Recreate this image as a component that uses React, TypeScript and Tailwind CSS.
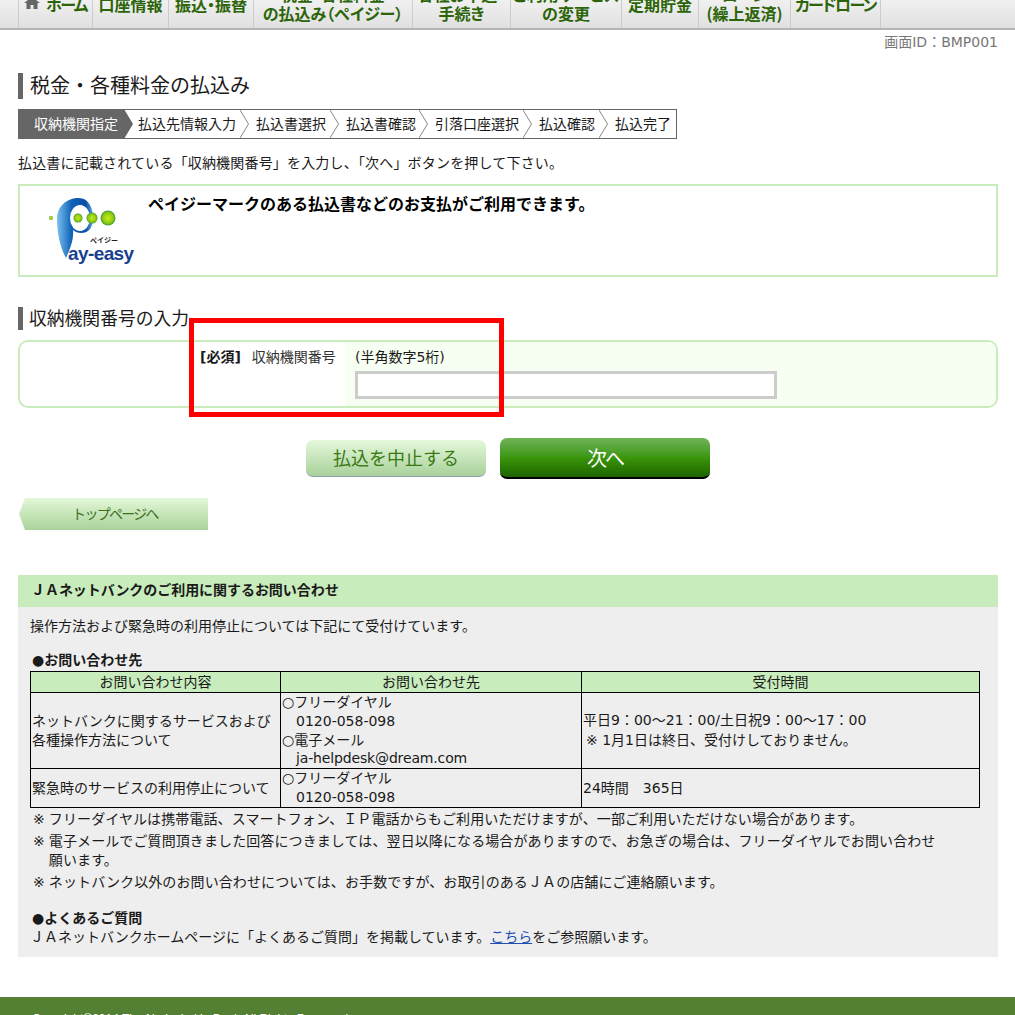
const navItems = [
  { w: "w-[74px]", lines: ["ホーム"], home: true, narrow: true },
  { w: "w-[76px]", lines: ["口座情報"] },
  { w: "w-[85px]", lines: ["振込・振替"] },
  { w: "w-[159px]", lines: ["税金・各種料金", "の払込み（ペイジー）"] },
  { w: "w-[98px]", lines: ["各種お申込・", "手続き"] },
  { w: "w-[111px]", lines: ["ご利用サービス", "の変更"] },
  { w: "w-[77px]", lines: ["定期貯金"] },
  { w: "w-[92px]", lines: ["ローン", "(繰上返済)"] },
  { w: "w-[91px]", lines: ["カードローン"], narrow: true },
];

const steps = [
  { label: "払込先情報入力", cls: "pl-[5px] pr-[4px]" },
  { label: "払込書選択", cls: "pl-[7px] pr-[4px]" },
  { label: "払込書確認", cls: "pl-[7px] pr-[3px]" },
  { label: "引落口座選択", cls: "pl-[7px] pr-[4px]" },
  { label: "払込確認", cls: "pl-[7px] pr-[4px]" },
];

function Chevron() {
  return (
    <svg width="9" height="28" viewBox="0 0 9 28" className="shrink-0">
      <polyline points="0,0 8.5,14 0,28" fill="none" stroke="#888888" strokeWidth="1" />
    </svg>
  );
}

function PayEasyLogo() {
  return (
    <svg width="90" height="70" viewBox="0 0 90 70" className="shrink-0">
      <defs>
        <linearGradient id="pBlue" x1="0" y1="0" x2="1" y2="0">
          <stop offset="0" stopColor="#7cc2ee" />
          <stop offset="0.4" stopColor="#0f62b8" />
          <stop offset="0.8" stopColor="#0b4fa6" />
          <stop offset="1" stopColor="#5fa8e0" />
        </linearGradient>
        <radialGradient id="dot" cx="0.5" cy="0.5" r="0.5">
          <stop offset="0" stopColor="#c8ea1c" />
          <stop offset="0.7" stopColor="#8ccb10" />
          <stop offset="1" stopColor="#3f9a3a" />
        </radialGradient>
      </defs>
      <path
        d="M9 24 C9 11 19 3 31 3 C40 3 45 12 45 23 C45 32 41 38 33 38 C30 38 27 37 25 35 C26 44 22 54 18 63 C12 52 9 38 9 24 Z"
        fill="url(#pBlue)"
      />
      <ellipse cx="32" cy="23" rx="10" ry="13" fill="#ffffff" />
      <circle cx="3" cy="23" r="2" fill="url(#dot)" />
      <circle cx="30" cy="23" r="4.500" fill="url(#dot)" />
      <circle cx="44" cy="23" r="5.500" fill="url(#dot)" />
      <circle cx="60" cy="23" r="7.500" fill="url(#dot)" />
      <text x="42" y="48" className="fill-[#222222] text-[7px] font-bold">
        ペイジー
      </text>
      <text x="20" y="65" className="fill-[#17418f] text-[19px] font-bold tracking-[-0.6px] [font-family:'Liberation_Sans',sans-serif]">
        ay-easy
      </text>
    </svg>
  );
}

export default function App() {
  return (
    <div className="relative h-[1015px] overflow-hidden bg-white text-[14px] leading-[19px] text-[#1a1a1a] [font-family:'DejaVu_Sans','Noto_Sans_CJK_JP',sans-serif]">
      <div className="flex h-[30px] items-end overflow-hidden border-b-2 border-[#b4b4b4] bg-gradient-to-b from-[#f0f0f0] to-[#e0e0e0] pl-[18px]">
        {navItems.map((item) => (
          <div
            key={item.lines.join("")}
            className={`${item.w} ${item.narrow ? "tracking-[-1.5px]" : ""} flex h-[48px] shrink-0 flex-col items-center justify-center border-l border-[#cccccc] text-[16px] leading-[19px] font-bold whitespace-nowrap text-[#2c6408] [font-family:'Noto_Sans_CJK_JP',sans-serif] [font-feature-settings:'palt'] last:border-r`}
          >
            {item.lines.map((line) => (
              <span key={line} className="flex items-center gap-[6px]">
                {item.home && (
                  <svg width="16" height="14" viewBox="0 0 16 14">
                    <path d="M8 0 L16 6 L13.500 6 L13.500 12 L9.500 12 L9.500 8 L6.500 8 L6.500 12 L2.500 12 L2.500 6 L0 6 Z" fill="#666666" />
                  </svg>
                )}
                {line}
              </span>
            ))}
          </div>
        ))}
      </div>

      <div className="flex justify-end pt-[3px] pr-[17px] text-[#777777]">画面ID：BMP001</div>

      <div className="px-[17px] pl-[18px]">
        <h1 className="mt-[21px] flex h-[26px] items-center border-l-[5px] border-[#666666] pl-[7px] text-[20px] font-normal">
          税金・各種料金の払込み
        </h1>

        <div className="mt-[10px] flex h-[30px] w-[659px] items-center border border-[#666666] whitespace-nowrap">
          <div className="flex h-[30px] items-center">
            <div className="-my-px -ml-px flex h-[30px] items-center bg-[#666666] pr-[6px] pl-[16px] text-white">収納機関指定</div>
            <div className="h-0 w-0 border-y-[15px] border-l-[9px] border-y-transparent border-l-[#666666]" />
          </div>
          {steps.map((step) => (
            <div key={step.label} className="flex items-center">
              <span className={step.cls}>{step.label}</span>
              <Chevron />
            </div>
          ))}
          <span className="pl-[7px]">払込完了</span>
        </div>

        <p className="mt-[15px] tracking-[0.18px]">払込書に記載されている「収納機関番号」を入力し、「次へ」ボタンを押して下さい。</p>

        <div className="mt-[11px] flex h-[93px] gap-[10px] border-2 border-[#c8ecbc] pt-[9px] pl-[28px]">
          <PayEasyLogo />
          <p className="-mt-[1px] text-[16px] leading-[22px] font-bold text-black">ペイジーマークのある払込書などのお支払がご利用できます。</p>
        </div>

        <h2 className="mt-[30px] flex h-[23px] items-center border-l-[5px] border-[#666666] pl-[6px] text-[17.800px] font-normal whitespace-nowrap">
          収納機関番号の入力
        </h2>

        <div className="mt-[10px] flex h-[68px] overflow-hidden rounded-[10px] border-2 border-[#c8ecbc]">
          <div className="flex w-[325px] shrink-0 items-start pt-[6px] pl-[180px]">
            <span className="font-bold">[必須]</span>
            <span className="ml-[11px] text-[#333333]">収納機関番号</span>
          </div>
          <div className="flex-1 bg-[#f7fff2] pt-[6px] pl-[10px]">
            <div>(半角数字5桁)</div>
            <input type="text" className="mt-[4px] block h-[28px] w-[422px] border-[3px] border-[#cccccc] bg-white" />
          </div>
        </div>

        <div className="mt-[30px] flex h-[41px] items-center pl-[288px]">
          <button className="h-[37px] w-[180px] rounded-[7px] border-b border-[#8f9fb0] bg-gradient-to-b from-[#e5f9da] to-[#a9d09b] pt-[1px] text-[18px] text-[#3a7a14]">
            払込を中止する
          </button>
          <button className="ml-[14px] h-[41px] w-[210px] rounded-[7px] border-b-2 border-black bg-gradient-to-b from-[#71b356] via-[#3a960a] to-[#1d6400] pt-[4px] text-[20px] tracking-[-2px] text-white">
            次へ
          </button>
        </div>

        <div className="mt-[19px] ml-[1px] flex h-[32px] w-[189px] items-center justify-center bg-gradient-to-b from-[#e4f8d8] to-[#a9d29a] pl-[3px] text-[14px] tracking-[-1.700px] text-[#3f6f1c] [clip-path:polygon(6px_0,100%_0,100%_100%,6px_100%,0_50%)]">
          トップページへ
        </div>

        <div className="mt-[45px] flex h-[32px] items-center bg-[#c8ecbc] pb-[2px] pl-[13px] font-bold tracking-[-0.05px]">ＪＡネットバンクのご利用に関するお問い合わせ</div>
        <div className="h-[350px] bg-[#eeeeee] px-[12px] pt-[10px]">
          <p>操作方法および緊急時の利用停止については下記にて受付けています。</p>
          <p className="mt-[15px] pl-[2px] font-bold">●お問い合わせ先</p>
          <table className="mt-[1px] w-[950px] table-fixed border-collapse border border-black">
            <colgroup>
              <col className="w-[250px]" />
              <col className="w-[301px]" />
              <col />
            </colgroup>
            <thead>
              <tr className="h-[21px] bg-[#c8ecbc] text-center font-normal">
                <th className="border border-black font-normal">お問い合わせ内容</th>
                <th className="border border-black font-normal">お問い合わせ先</th>
                <th className="border border-black font-normal">受付時間</th>
              </tr>
            </thead>
            <tbody>
              <tr className="h-[75px] leading-[18.750px]">
                <td className="border border-black pl-[1px]">
                  ネットバンクに関するサービスおよび
                  <br />
                  各種操作方法について
                </td>
                <td className="border border-black pl-[1px]">
                  ○フリーダイヤル
                  <div className="pl-[14px]">0120-058-098</div>
                  ○電子メール
                  <div className="pl-[14px] tracking-[-0.15px]">ja-helpdesk@dream.com</div>
                </td>
                <td className="border border-black pl-[1px]">
                  平日9：00～21：00/土日祝9：00～17：00
                  <div className="mt-[1px] pl-[3px]">※ 1月1日は終日、受付けしておりません。</div>
                </td>
              </tr>
              <tr className="h-[39px]">
                <td className="border border-black pl-[1px]">緊急時のサービスの利用停止について</td>
                <td className="border border-black pl-[1px]">
                  ○フリーダイヤル
                  <div className="pl-[14px]">0120-058-098</div>
                </td>
                <td className="border border-black pl-[1px]">24時間　365日</td>
              </tr>
            </tbody>
          </table>
          <ul className="mt-[2px] flex flex-col gap-[3px] pl-[3px] tracking-[0.1px]">
            <li className="flex gap-[4px]">
              <span>※</span>
              <span>フリーダイヤルは携帯電話、スマートフォン、ＩＰ電話からもご利用いただけますが、一部ご利用いただけない場合があります。</span>
            </li>
            <li className="flex gap-[4px]">
              <span>※</span>
              <span>
                電子メールでご質問頂きました回答につきましては、翌日以降になる場合がありますので、お急ぎの場合は、フリーダイヤルでお問い合わせ
                <br />
                願います。
              </span>
            </li>
            <li className="flex gap-[4px]">
              <span>※</span>
              <span>ネットバンク以外のお問い合わせについては、お手数ですが、お取引のあるＪＡの店舗にご連絡願います。</span>
            </li>
          </ul>
          <p className="mt-[17px] pl-[2px] font-bold">●よくあるご質問</p>
          <p>
            ＪＡネットバンクホームページに「よくあるご質問」を掲載しています。
            <a className="text-[#1f4fb0] underline">こちら</a>
            をご参照願います。
          </p>
        </div>
      </div>

      <div className="mt-[40px] h-[60px] bg-[#548033] pt-[13px] pl-[32px] text-[12px] text-white [font-family:'Liberation_Sans',sans-serif]">
        Copyright©2014 The Norinchukin Bank All Rights Reserved.
      </div>

      <div className="absolute top-[318px] left-[189px] h-[99px] w-[315px] border-[5px] border-[#ff0000]" />
    </div>
  );
}
